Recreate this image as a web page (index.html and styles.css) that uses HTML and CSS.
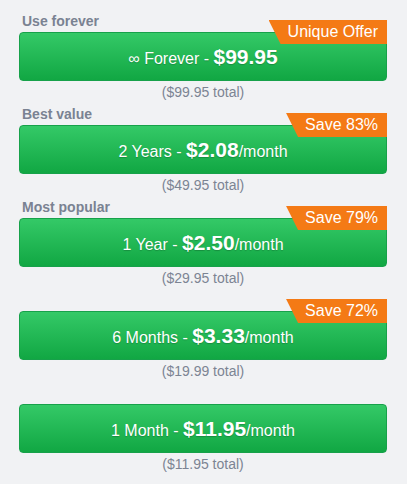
FILE: index.html
```html
<!DOCTYPE html>
<html lang="en">
<head>
  <meta charset="UTF-8">
  <meta name="viewport" content="width=device-width, initial-scale=1.0">
  <title>Plans</title>
  <link rel="stylesheet" href="styles.css">
</head>
<body>
  <div class="plans">

    <div class="plan">
      <div class="plan-label">Use forever</div>
      <button class="plan-btn">
        <span class="name">&#8734; Forever - </span><span class="price">$99.95</span>
        <span class="badge">Unique Offer</span>
      </button>
      <div class="plan-total">($99.95 total)</div>
    </div>

    <div class="plan">
      <div class="plan-label">Best value</div>
      <button class="plan-btn">
        <span class="name">2 Years - </span><span class="price">$2.08</span><span class="per">/month</span>
        <span class="badge">Save 83%</span>
      </button>
      <div class="plan-total">($49.95 total)</div>
    </div>

    <div class="plan">
      <div class="plan-label">Most popular</div>
      <button class="plan-btn">
        <span class="name">1 Year - </span><span class="price">$2.50</span><span class="per">/month</span>
        <span class="badge">Save 79%</span>
      </button>
      <div class="plan-total">($29.95 total)</div>
    </div>

    <div class="plan">
      <div class="plan-label"></div>
      <button class="plan-btn">
        <span class="name">6 Months - </span><span class="price">$3.33</span><span class="per">/month</span>
        <span class="badge">Save 72%</span>
      </button>
      <div class="plan-total">($19.99 total)</div>
    </div>

    <div class="plan">
      <div class="plan-label"></div>
      <button class="plan-btn">
        <span class="name">1 Month - </span><span class="price">$11.95</span><span class="per">/month</span>
      </button>
      <div class="plan-total">($11.95 total)</div>
    </div>

  </div>
</body>
</html>
```

FILE: styles.css
```css
body {
  margin: 0;
  background: #f1f2f4;
  font-family: 'Liberation Sans', Arial, sans-serif;
}
.plans {
  width: 368px;
  padding: 8px 0 0 19px;
}
.plan {
  margin-top: 4px;
}
.plan-label {
  height: 18px;
  line-height: 18px;
  padding-left: 3px;
  font-size: 14px;
  font-weight: bold;
  color: #7a8292;
}
.plan-btn {
  position: relative;
  display: block;
  width: 100%;
  height: 49px;
  margin-top: 2px;
  padding: 0;
  border: 1px solid #17a14a;
  border-radius: 4px;
  background: linear-gradient(to bottom, #34c967, #11a743);
  color: #fff;
  font-family: inherit;
  text-align: center;
  line-height: 47px;
  text-shadow: 0 1px 1px rgba(0, 0, 0, 0.2);
  cursor: pointer;
}
.name,
.per {
  font-size: 16px;
}
.price {
  font-size: 21px;
  font-weight: bold;
}
.badge {
  position: absolute;
  top: -13px;
  right: -1px;
  height: 24px;
  line-height: 24px;
  padding: 0 9px 0 19px;
  background: #f47a15;
  color: #fff;
  font-size: 16px;
  text-shadow: none;
  clip-path: polygon(0 0, 100% 0, 100% 100%, 12px 100%);
}
.plan-total {
  height: 18px;
  line-height: 18px;
  margin-top: 2px;
  text-align: center;
  font-size: 14px;
  color: #7c8493;
}
```
